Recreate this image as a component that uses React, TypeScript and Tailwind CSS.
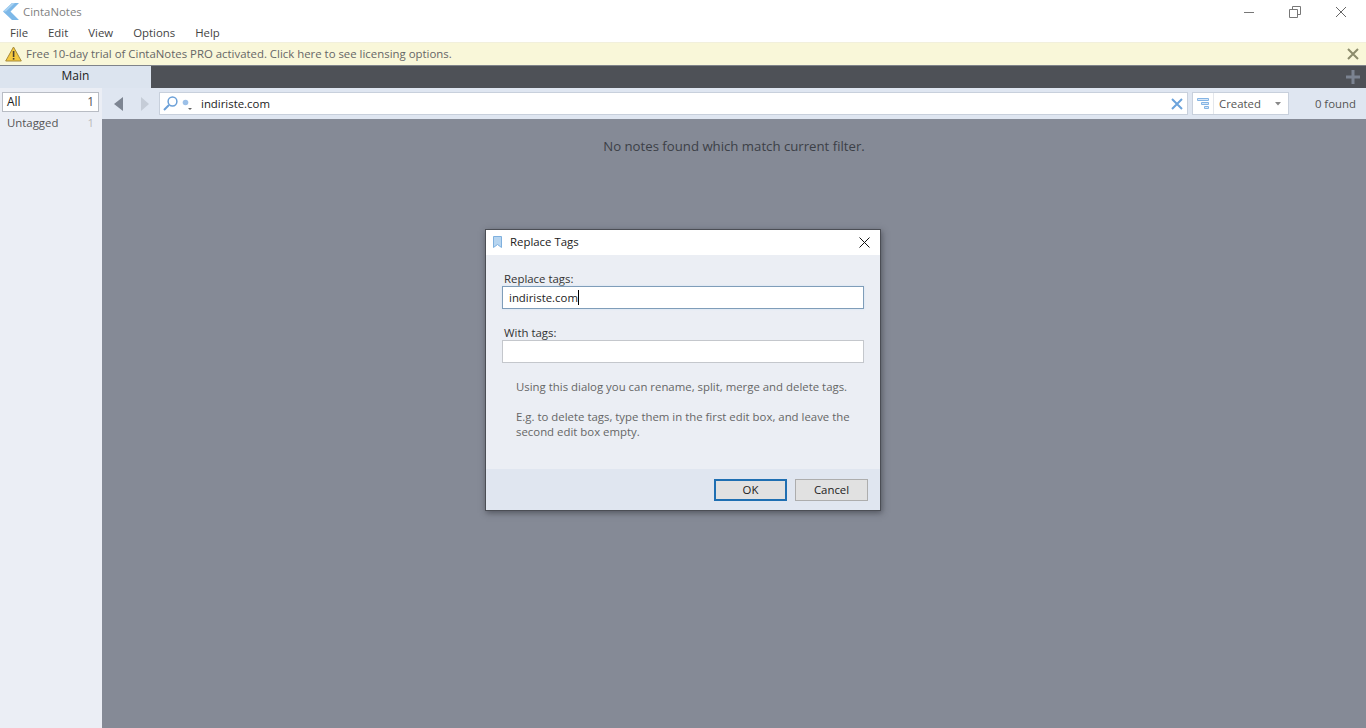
import React from "react";

function Logo() {
  return (
    <svg width="16" height="17" viewBox="0 0 16 17" className="shrink-0">
      <path d="M9 0 L0 8.5 L9 17 L16 17 L7.5 8.5 L16 0 Z" fill="#7db8e8" />
      <path d="M9 0 L0 8.5 L3 8.5 L12 0 Z" fill="#a9d2f2" />
    </svg>
  );
}

function Warn() {
  return (
    <svg width="17" height="16" viewBox="0 0 17 16" className="shrink-0">
      <path d="M8.5 1 L16.3 15 L.7 15 Z" fill="#f5c93f" stroke="#a68a3a" strokeWidth="1" strokeLinejoin="round" />
      <rect x="7.8" y="5" width="1.6" height="6" fill="#4a4030" />
      <rect x="7.8" y="12" width="1.6" height="1.6" fill="#4a4030" />
    </svg>
  );
}

export default function App() {
  return (
    <div className="relative flex h-[728px] w-[1366px] flex-col overflow-hidden bg-white font-['Open_Sans','Noto_Sans',sans-serif] text-[11.4px] text-[#333]">
      {/* Title bar */}
      <div className="flex h-[23px] items-center bg-white pl-[3px]">
        <Logo />
        <span className="ml-[4px] text-[#7f7f7f]">CintaNotes</span>
        <div className="ml-auto flex items-center">
          <svg width="12" height="12" viewBox="0 0 12 12" className="mr-[34px]"><path d="M1 6.5H11" stroke="#777" /></svg>
          <svg width="12" height="12" viewBox="0 0 12 12" className="mr-[34px]"><path d="M.5 3.5H8.5V11.5H.5Z M3.5 3.5V.5H11.5V8.5H8.5" stroke="#777" fill="none" /></svg>
          <svg width="12" height="12" viewBox="0 0 12 12" className="mr-[19px]"><path d="M1 1L11 11M11 1L1 11" stroke="#666" /></svg>
        </div>
      </div>

      {/* Menu */}
      <div className="flex h-[19px] items-center gap-[20px] pl-[10px] text-[#444]">
        <span>File</span>
        <span>Edit</span>
        <span>View</span>
        <span>Options</span>
        <span>Help</span>
      </div>

      {/* Notification */}
      <div className="flex h-[23px] items-center border-t border-[#f2f0dc] bg-[#f9f7d9] pl-[5px] pr-[7px] text-[#666]">
        <Warn />
        <span className="ml-[4px]">Free 10-day trial of CintaNotes PRO activated. Click here to see licensing options.</span>
        <svg width="12" height="12" viewBox="0 0 12 12" className="ml-auto"><path d="M1 1L11 11M11 1L1 11" stroke="#8c8c6c" strokeWidth="2" /></svg>
      </div>

      {/* Tabs */}
      <div className="flex h-[23px] items-stretch border-t border-[#7f838a] bg-[#4e5157]">
        <div className="flex w-[151px] items-center justify-center bg-[#dce4ef] pb-[2px] text-[12px] text-[#222]">Main</div>
        <div className="ml-auto flex items-center pr-[6px]">
          <svg width="14" height="14" viewBox="0 0 14 14"><path d="M7 0V14M0 7H14" stroke="#7b8391" strokeWidth="3" /></svg>
        </div>
      </div>

      <div className="flex min-h-0 flex-1">
        {/* Sidebar */}
        <aside className="flex w-[102px] shrink-0 flex-col bg-[#ebeef5] pt-[4px]">
          <div className="ml-[2px] mr-[3px] flex h-[20px] items-center justify-between border border-[#b8bcc4] bg-white pl-[4px] pr-[4px] text-[12px] text-[#222]">
            <span>All</span>
            <span className="text-[#555]">1</span>
          </div>
          <div className="ml-[7px] mr-[8px] mt-px flex h-[20px] items-center justify-between text-[#555]">
            <span>Untagged</span>
            <span className="text-[#bbb]">1</span>
          </div>
        </aside>

        <div className="flex min-w-0 flex-1 flex-col">
          {/* Toolbar */}
          <div className="flex h-[31px] items-center bg-[#dfe6f1] pl-[12px]">
            <svg width="9" height="14" viewBox="0 0 9 14" className="shrink-0"><path d="M9 0V14L0 7Z" fill="#7d8592" /></svg>
            <svg width="8" height="14" viewBox="0 0 8 14" className="ml-[18px] shrink-0"><path d="M0 0V14L8 7Z" fill="#c5ccd7" /></svg>
            <div className="ml-[10px] flex h-[23px] w-[1029px] items-center border border-[#c8d0dc] bg-white pl-[3px] pr-[4px]">
              <svg width="15" height="15" viewBox="0 0 15 15" className="shrink-0">
                <circle cx="9.5" cy="5.5" r="4.4" fill="none" stroke="#6ba0d8" strokeWidth="1.5" />
                <path d="M6 9L1 14" stroke="#6ba0d8" strokeWidth="2" />
              </svg>
              <svg width="12" height="15" viewBox="0 0 12 15" className="ml-[3px] shrink-0">
                <circle cx="4.5" cy="6.5" r="2.8" fill="#9cc0e8" />
                <path d="M7 12H11L9 14Z" fill="#666" />
              </svg>
              <span className="ml-[8px] text-[#222]">indiriste.com</span>
              <svg width="12" height="12" viewBox="0 0 12 12" className="ml-auto shrink-0"><path d="M1 1L11 11M11 1L1 11" stroke="#6ba3dc" strokeWidth="2" /></svg>
            </div>
            <div className="ml-[4px] flex h-[23px] w-[97px] items-center border border-[#c8d0dc] bg-white">
              <div className="flex h-full w-[21px] items-center justify-center border-r border-[#e4e7ec]">
                <svg width="12" height="11" viewBox="0 0 12 11">
                  <path d="M.5.5H11.5V2.5H.5Z M4.5 4.5H11.5V6.5H4.5Z M7.5 8.5H11.5V10.5H7.5Z" fill="#d6e6f7" stroke="#84b4e4" />
                </svg>
              </div>
              <span className="ml-[5px] text-[#555]">Created</span>
              <svg width="6" height="4" viewBox="0 0 6 4" className="ml-auto mr-[7px]"><path d="M0 0H6L3 3.5Z" fill="#888" /></svg>
            </div>
            <span className="ml-auto pr-[10px] pt-[1px] text-[#555]">0 found</span>
          </div>
          {/* Content */}
          <main className="flex flex-1 justify-center bg-[#858a96] pt-[18px]">
            <span className="text-[13.2px] text-[#3c4047]">No notes found which match current filter.</span>
          </main>
        </div>
      </div>

      {/* Dialog */}
      <div className="absolute left-[485px] top-[229px] flex h-[282px] w-[396px] flex-col border border-[#4b4e55] bg-[#ebeef4] shadow-[1px_2px_6px_rgba(40,42,50,0.55)]">
        <div className="flex h-[25px] shrink-0 items-center bg-white pb-px pl-[7px] pr-[10px]">
          <svg width="9" height="12" viewBox="0 0 9 12" className="shrink-0"><path d="M.5.5H8.5V11.5L4.5 8.5L.5 11.5Z" fill="#b7d5f0" stroke="#7fb0de" /></svg>
          <span className="ml-[8px] text-[#222]">Replace Tags</span>
          <svg width="11" height="11" viewBox="0 0 11 11" className="ml-auto"><path d="M.5.5L10.5 10.5M10.5.5L.5 10.5" stroke="#111" /></svg>
        </div>
        <div className="flex flex-1 flex-col px-[16px] pt-[15px]">
          <label className="pl-[2px] leading-[17px] text-[#333]">Replace tags:</label>
          <div className="mt-[-1px] flex h-[23px] w-[362px] items-center border border-[#7f9db9] bg-white pl-[6px] text-[#222] shadow-[0_0_2px_#cfe2f5]">
            <span>indiriste.com</span>
            <span className="h-[15px] w-px bg-black" />
          </div>
          <label className="mt-[15px] pl-[2px] leading-[17px] text-[#333]">With tags:</label>
          <div className="mt-[-1px] h-[23px] w-[362px] border border-[#c4c7cc] bg-white" />
          <p className="mt-[16px] pl-[14px] leading-[15px] text-[#666]">Using this dialog you can rename, split, merge and delete tags.</p>
          <p className="mt-[15px] w-[350px] pl-[14px] leading-[15px] text-[#666]">E.g. to delete tags, type them in the first edit box, and leave the second edit box empty.</p>
        </div>
        <div className="flex h-[41px] shrink-0 items-center justify-end gap-[8px] bg-[#e0e6f0] pr-[12px]">
          <div className="flex h-[22px] w-[73px] items-center justify-center border-2 border-[#1f6fb2] bg-[#e1e1e1] text-[#222]">OK</div>
          <div className="flex h-[22px] w-[73px] items-center justify-center border border-[#adadad] bg-[#e1e1e1] text-[#222]">Cancel</div>
        </div>
      </div>
    </div>
  );
}
